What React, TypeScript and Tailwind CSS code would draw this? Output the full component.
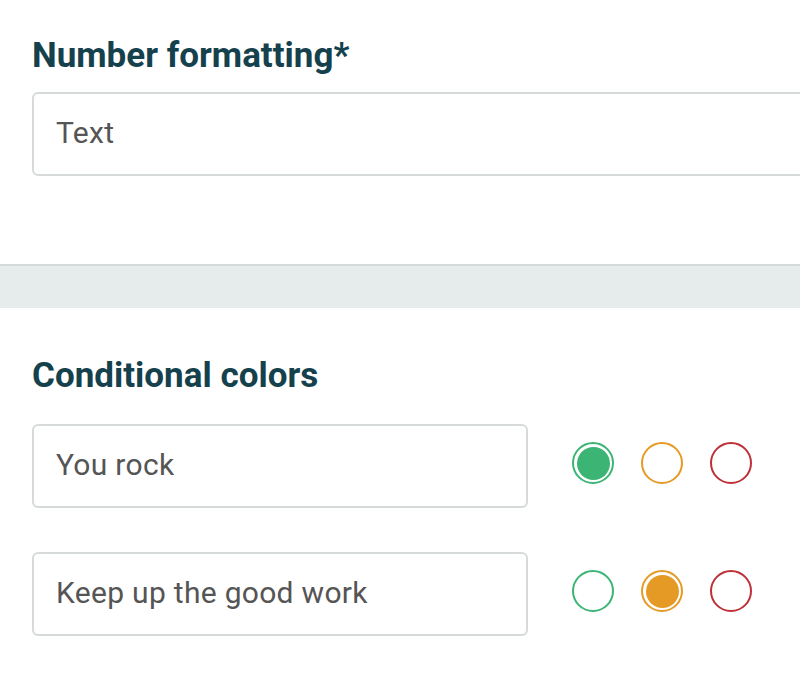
import React from 'react';

type Tone = 'green' | 'orange' | 'red';

const ring: Record<Tone, string> = {
  green: 'border-[#3bb474]',
  orange: 'border-[#e59a25]',
  red: 'border-[#bf2f38]',
};

const fill: Record<Tone, string> = {
  green: 'bg-[#3bb474]',
  orange: 'bg-[#e59a25]',
  red: 'bg-[#bf2f38]',
};

const Dot = ({ tone, selected }: { tone: Tone; selected?: boolean }) => (
  <span className={`w-[42px] h-[42px] rounded-full border-2 ${ring[tone]} flex items-center justify-center shrink-0`}>
    {selected && <span className={`w-[33px] h-[33px] rounded-full ${fill[tone]}`} />}
  </span>
);

const ColorRow = ({ label, selected }: { label: string; selected: Tone }) => (
  <div className="flex items-center">
    <div className="w-[496px] h-[84px] border-2 border-[#d6dbda] rounded-[6px] flex items-center px-[22px] pb-[4px] text-[30px] tracking-[0.3px] text-[#555555]">
      {label}
    </div>
    <div className="flex items-center gap-[27px] ml-[44px] mb-[6px]">
      {(['green', 'orange', 'red'] as Tone[]).map((t) => (
        <Dot key={t} tone={t} selected={t === selected} />
      ))}
    </div>
  </div>
);

export default function App() {
  return (
    <div className="w-[800px] h-[676px] overflow-hidden bg-white font-['Roboto',sans-serif]">
      <section className="pl-[32px] pt-[36px] pb-[88px]">
        <h2 className="text-[35px] leading-[40px] font-bold text-[#15414d]">Number formatting*</h2>
        <div className="mt-[16px] w-[800px] h-[84px] border-2 border-[#d6dbda] rounded-[6px] flex items-center px-[22px] pb-[4px] text-[30px] tracking-[0.3px] text-[#555555]">
          Text
        </div>
      </section>
      <div className="h-[44px] bg-[#e6ecec] border-t-2 border-[#d3dad9]" />
      <section className="pl-[32px] pt-[48px]">
        <h2 className="text-[35px] leading-[40px] font-bold text-[#15414d]">Conditional colors</h2>
        <div className="mt-[28px] flex flex-col gap-[44px]">
          <ColorRow label="You rock" selected="green" />
          <ColorRow label="Keep up the good work" selected="orange" />
        </div>
      </section>
    </div>
  );
}
